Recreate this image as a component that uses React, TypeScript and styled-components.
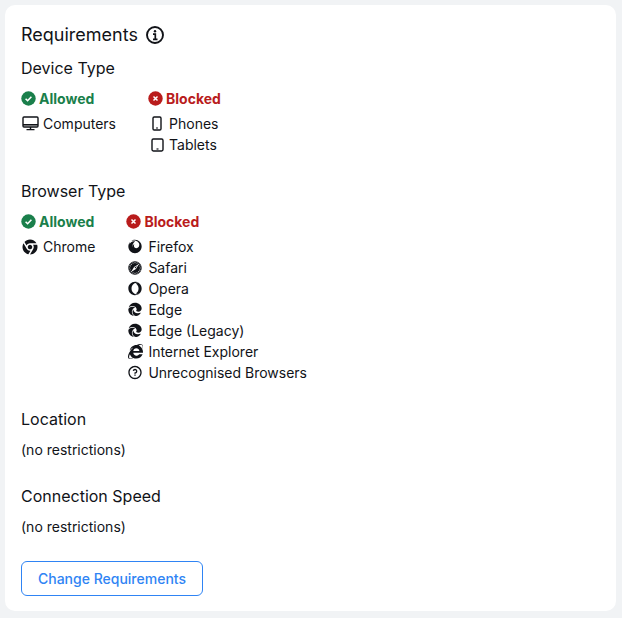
import React from "react";
import styled, { createGlobalStyle } from "styled-components";
import { FaInternetExplorer } from "react-icons/fa";
import { RiChromeFill, RiFirefoxFill, RiSafariFill, RiOperaFill, RiEdgeNewFill, RiQuestionLine } from "react-icons/ri";

const Global = createGlobalStyle`
  html, body { margin: 0; padding: 0; background: #f1f3f5; }
  body { font-family: Inter, "Noto Sans", sans-serif; color: #111318; }
`;
const Page = styled.div`
  padding: 5px 6px 7px 5px;
`;
const Card = styled.main`
  box-sizing: border-box;
  background: #fff;
  border-radius: 10px;
  padding: 17px 16px 16px;
  height: 606px;
`;
const Title = styled.h1`
  display: flex;
  align-items: center;
  gap: 7px;
  margin: 0;
  height: 26px;
  font-size: 18px;
  line-height: 26px;
  font-weight: 400;
`;
const InfoIcon = styled.svg`
  width: 20px;
  height: 20px;
`;
const Section = styled.section<{ $top: number }>`
  margin-top: ${(p) => p.$top}px;
`;
const SectionTitle = styled.h2`
  margin: 0;
  font-size: 16px;
  line-height: 24px;
  font-weight: 400;
`;
const Columns = styled.div<{ $gap: number }>`
  display: flex;
  gap: ${(p) => p.$gap}px;
  margin-top: 8px;
`;
const Column = styled.div`
  display: flex;
  flex-direction: column;
`;
const Status = styled.div<{ $ok: boolean }>`
  display: flex;
  align-items: center;
  gap: 3px;
  height: 21px;
  margin-bottom: 4px;
  font-size: 14px;
  font-weight: 700;
  color: ${(p) => (p.$ok ? "#1a7f4b" : "#b91c1c")};
  svg { width: 15px; height: 15px; flex: none; }
`;
const Row = styled.div<{ $indent?: number; $gap: number }>`
  display: flex;
  align-items: center;
  gap: ${(p) => p.$gap}px;
  height: 21px;
  padding-left: ${(p) => p.$indent ?? 0}px;
  font-size: 14px;
  line-height: 21px;
`;
const IconBox = styled.span<{ $w: number }>`
  display: flex;
  align-items: center;
  justify-content: center;
  width: ${(p) => p.$w}px;
  flex: none;
  svg { display: block; }
`;
const Plain = styled.p`
  margin: 7px 0 0;
  font-size: 14px;
  line-height: 24px;
`;
const Button = styled.button`
  display: block;
  margin-top: 22px;
  width: 182px;
  height: 35px;
  background: #fff;
  border: 1px solid #2f84f4;
  border-radius: 6px;
  color: #2f84f4;
  font: 500 14px Inter, sans-serif;
  padding: 0 0 1px;
`;

const Check = () => (
  <svg viewBox="0 0 15 15" fill="none">
    <circle cx="7.5" cy="7.5" r="7.2" fill="currentColor" />
    <path d="M4.6 7.7l2 2 3.8-3.9" stroke="#fff" strokeWidth="1.6" />
  </svg>
);
const Cross = () => (
  <svg viewBox="0 0 15 15" fill="none">
    <circle cx="7.5" cy="7.5" r="7.2" fill="currentColor" />
    <path d="M5.5 5.5l4 4M9.5 5.5l-4 4" stroke="#fff" strokeWidth="1.5" />
  </svg>
);
const Desktop = () => (
  <svg width="17" height="15" viewBox="0 0 17 15" fill="none" stroke="#111318" strokeWidth="1.4">
    <rect x="1" y="1" width="15" height="10" rx="1" />
    <path d="M1 8.8h15" strokeWidth="1.6" />
    <path d="M8.5 11v2.5M4.5 13.6h8" strokeWidth="1.4" />
  </svg>
);
const Phone = () => (
  <svg width="10" height="15" viewBox="0 0 10 15" fill="none" stroke="#111318" strokeWidth="1.4">
    <rect x="1" y="1" width="8" height="13" rx="1.2" />
    <path d="M4 12h2" strokeWidth="1.2" />
  </svg>
);
const Tablet = () => (
  <svg width="13" height="14" viewBox="0 0 13 14" fill="none" stroke="#111318" strokeWidth="1.4">
    <rect x="1" y="1" width="11" height="12" rx="1.4" />
    <path d="M5.5 11h2" strokeWidth="1.2" />
  </svg>
);

const browsers: [string, React.ReactNode][] = [
  ["Firefox", <RiFirefoxFill size={19} />],
  ["Safari", <RiSafariFill size={18} />],
  ["Opera", <RiOperaFill size={19} />],
  ["Edge", <RiEdgeNewFill size={19} />],
  ["Edge (Legacy)", <RiEdgeNewFill size={19} />],
  ["Internet Explorer", <FaInternetExplorer size={15} />],
  ["Unrecognised Browsers", <RiQuestionLine size={19} />],
];

export default function App() {
  return (
    <Page>
      <Global />
      <Card>
        <Title>
          Requirements
          <InfoIcon viewBox="0 0 20 20" fill="none">
            <circle cx="10" cy="10" r="8" stroke="#111318" strokeWidth="1.9" />
            <circle cx="10" cy="6.2" r="1.2" fill="#111318" />
            <path d="M8 9.2h2.3v5M8 14.3h4.5" stroke="#111318" strokeWidth="1.7" />
          </InfoIcon>
        </Title>
        <Section $top={8}>
          <SectionTitle>Device Type</SectionTitle>
          <Columns $gap={32}>
            <Column>
              <Status $ok><Check />Allowed</Status>
              <Row $gap={4}><IconBox $w={18}><Desktop /></IconBox>Computers</Row>
            </Column>
            <Column>
              <Status $ok={false}><Cross />Blocked</Status>
              <Row $indent={2} $gap={5}><IconBox $w={14}><Phone /></IconBox>Phones</Row>
              <Row $indent={2} $gap={5}><IconBox $w={14}><Tablet /></IconBox>Tablets</Row>
            </Column>
          </Columns>
        </Section>
        <Section $top={24}>
          <SectionTitle>Browser Type</SectionTitle>
          <Columns $gap={31}>
            <Column>
              <Status $ok><Check />Allowed</Status>
              <Row $gap={4}><IconBox $w={18}><RiChromeFill size={18} /></IconBox>Chrome</Row>
            </Column>
            <Column>
              <Status $ok={false}><Cross />Blocked</Status>
              {browsers.map(([name, icon]) => (
                <Row key={name} $indent={1} $gap={5}>
                  <IconBox $w={16}>{icon}</IconBox>
                  {name}
                </Row>
              ))}
            </Column>
          </Columns>
        </Section>
        <Section $top={24}>
          <SectionTitle>Location</SectionTitle>
          <Plain>(no restrictions)</Plain>
        </Section>
        <Section $top={22}>
          <SectionTitle>Connection Speed</SectionTitle>
          <Plain>(no restrictions)</Plain>
        </Section>
        <Button>Change Requirements</Button>
      </Card>
    </Page>
  );
}
